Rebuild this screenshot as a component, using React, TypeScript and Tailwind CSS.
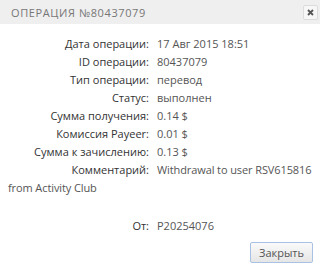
export default function App() {
  const rows: [string, string][] = [
    ["Дата операции:", "17 Авг 2015 18:51"],
    ["ID операции:", "80437079"],
    ["Тип операции:", "перевод"],
    ["Статус:", "выполнен"],
    ["Сумма получения:", "0.14 $"],
    ["Комиссия Payeer:", "0.01 $"],
    ["Сумма к зачислению:", "0.13 $"],
  ];
  return (
    <div
      className="w-[320px] h-[274px] bg-white overflow-hidden text-[11px] text-[#444]"
      style={{ fontFamily: '"Open Sans", "Liberation Sans", sans-serif' }}
    >
      <div className="h-[24px] bg-[#efefef] flex items-center justify-between pl-[11px] pr-[2px]">
        <span className="text-[11px] tracking-[0.6px] text-[#777] leading-none">ОПЕРАЦИЯ №80437079</span>
        <div className="w-[15px] h-[15px] border border-[#dcdcdc] bg-[#f7f7f7] rounded-[2px] flex items-center justify-center">
          <svg width="7" height="7" viewBox="0 0 7 7">
            <path d="M1 1L6 6M6 1L1 6" stroke="#555" strokeWidth="1.8" />
          </svg>
        </div>
      </div>
      <div className="pt-[11px] pl-[8px] pr-[1px] leading-[18px]">
        {rows.map(([l, v]) => (
          <div key={l} className="flex">
            <span className="w-[141px] text-right text-[#333]">{l}</span>
            <span className="ml-[8px] text-[#555]">{v}</span>
          </div>
        ))}
        <div>
          <span className="inline-block w-[141px] text-right text-[#333]">Комментарий:</span>
          <span className="ml-[8px] text-[#555] tracking-[-0.1px]">Withdrawal to user RSV615816 from Activity Club</span>
        </div>
        <div className="mt-[20px] flex">
          <span className="w-[141px] text-right text-[#333]">От:</span>
          <span className="ml-[8px] text-[#555]">P20254076</span>
        </div>
        <div className="flex justify-end mt-[7px] pr-[6px]">
          <button className="w-[63px] h-[21px] border border-[#a9c1e3] rounded-[2px] bg-gradient-to-b from-[#fafafa] to-[#e6e6e6] text-[#555] text-[11px] leading-none">
            Закрыть
          </button>
        </div>
      </div>
    </div>
  );
}
